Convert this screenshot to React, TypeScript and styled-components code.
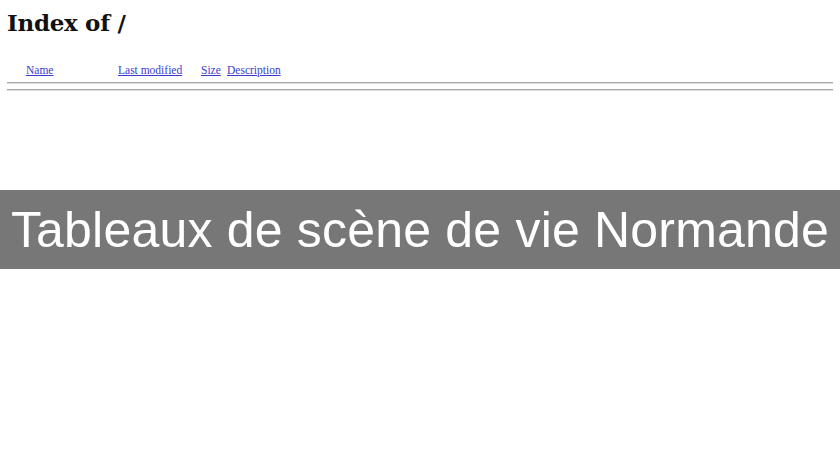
import React from "react";
import styled, { createGlobalStyle } from "styled-components";

const Global = createGlobalStyle`
  html, body { margin: 0; padding: 0; background: #ffffff; }
  body { width: 840px; height: 460px; overflow: hidden; }
`;

const Page = styled.div`
  width: 840px;
  height: 460px;
  display: flex;
  flex-direction: column;
`;

const Listing = styled.div`
  padding: 0 7px;
  display: flex;
  flex-direction: column;
`;

const Title = styled.h1`
  margin: 8px 0 0 0;
  font-family: "DejaVu Serif", serif;
  font-weight: bold;
  font-size: 23px;
  line-height: 30px;
  color: #111;
  letter-spacing: -0.3px;
`;

const HeaderRow = styled.div`
  margin-top: 25px;
  display: grid;
  grid-template-columns: 19px 92px 83px 26px auto;
  font-family: "Liberation Serif", serif;
  font-size: 11.5px;
  line-height: 14px;
`;

const HeadLink = styled.a`
  color: #3a3acf;
  text-decoration: underline;
`;

const Rule = styled.div<{ $gap: number }>`
  margin-top: ${(p) => p.$gap}px;
  height: 1px;
  background: #a8a8a8;
  border-bottom: 1px solid #dcdcdc;
`;

const Spacer = styled.div`
  height: 99px;
`;

const Banner = styled.div`
  height: 79px;
  background: #777777;
  display: flex;
  align-items: center;
  justify-content: center;
`;

const BannerText = styled.div`
  font-family: "Liberation Sans", Arial, sans-serif;
  font-size: 50px;
  letter-spacing: 0.2px;
  color: #ffffff;
  white-space: nowrap;
`;

export default function App() {
  return (
    <Page>
      <Global />
      <Listing>
        <Title>Index of /</Title>
        <HeaderRow>
          <span />
          <span><HeadLink href="#">Name</HeadLink></span>
          <span><HeadLink href="#">Last modified</HeadLink></span>
          <span><HeadLink href="#">Size</HeadLink></span>
          <span><HeadLink href="#">Description</HeadLink></span>
        </HeaderRow>
        <Rule $gap={5} />
        <Rule $gap={5} />
      </Listing>
      <Spacer />
      <Banner>
        <BannerText>Tableaux de scène de vie Normande</BannerText>
      </Banner>
    </Page>
  );
}
